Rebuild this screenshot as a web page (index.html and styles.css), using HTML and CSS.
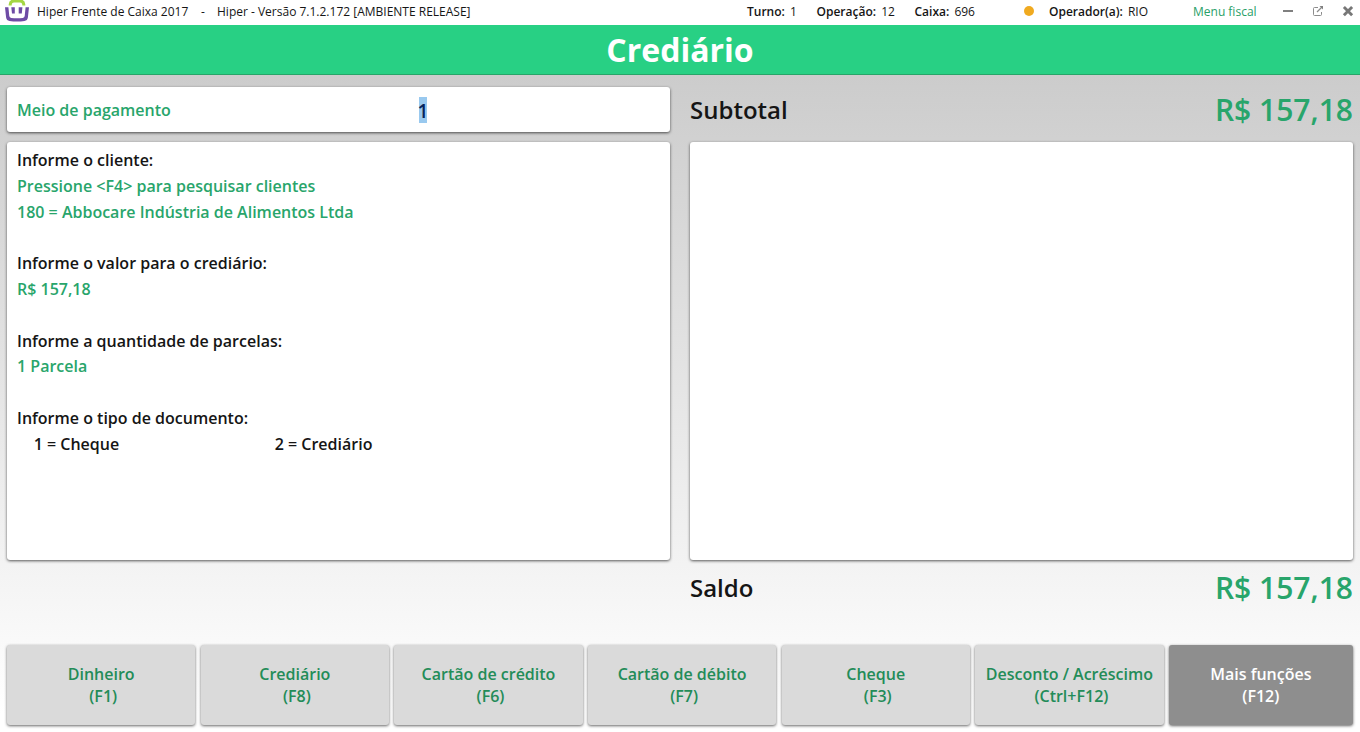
FILE: index.html
```html
<!DOCTYPE html>
<html lang="pt-BR">
<head>
<meta charset="utf-8">
<title>Hiper Frente de Caixa 2017</title>
<link rel="stylesheet" href="styles.css">
</head>
<body>
<header class="titlebar">
  <svg class="logo" width="32" height="24" viewBox="0 0 32 24"><path d="M10.200 5.500V4.500Q10.500 1 14 1H20Q23.500 1 23.800 4.500V5.500" fill="none" stroke="#a4d644" stroke-width="3"/><path d="M5 7.300H8.400L9.300 16Q9.500 17.700 11.200 17.900 17 18.500 22.800 17.900 24.500 17.700 24.700 16L25.600 7.300H29L27.900 17.500Q27.500 20.500 24.500 21 17 22.200 9.500 21 6.500 20.500 6.100 17.500Z" fill="#6e4ba5"/><path d="M11.300 7.300H14.800V13.600H12zM18.700 7.300H22.400L21.800 13.600H18.700z" fill="#6e4ba5"/></svg>
  <span class="app-name">Hiper Frente de Caixa 2017</span>
  <span class="dash">-</span>
  <span class="version">Hiper - Versão 7.1.2.172 [AMBIENTE RELEASE]</span>
  <span class="turno"><b>Turno:</b> 1</span>
  <span class="operacao"><b>Operação:</b> 12</span>
  <span class="caixa"><b>Caixa:</b> 696</span>
  <span class="status"></span>
  <span class="operador"><b>Operador(a):</b> RIO</span>
  <a class="menu">Menu fiscal</a>
  <svg class="controls" width="80" height="24" viewBox="0 0 80 24"><path d="M3 10h10v2H3z" fill="#808080"/><g fill="none" stroke="#8c8c8c"><path d="M38 7.500h-3.500q-1 0-1 1v6q0 1 1 1h6q1 0 1-1V12"/><path d="M37 12l5.500-5.500" stroke-width="1.300"/></g><path d="M39.500 6H43v3.500z" fill="#808080"/><path d="M63.900 7l8.200 8.200m0-8.200-8.200 8.200" stroke="#777" stroke-width="2.900"/></svg>
</header>
<h1 class="heading">Crediário</h1>
<main class="content">
  <div class="column">
    <section class="card payment"><label class="payment-label">Meio de pagamento</label><span class="selected">1</span></section>
    <section class="card details">
      <p>Informe o cliente:</p>
      <p class="value">Pressione &lt;F4&gt; para pesquisar clientes</p>
      <p class="value">180 = Abbocare Indústria de Alimentos Ltda</p>
      <p></p>
      <p>Informe o valor para o crediário:</p>
      <p class="value">R$ 157,18</p>
      <p></p>
      <p>Informe a quantidade de parcelas:</p>
      <p class="value">1 Parcela</p>
      <p></p>
      <p>Informe o tipo de documento:</p>
      <p class="options"><span>1 = Cheque</span><span>2 = Crediário</span></p>
    </section>
  </div>
  <div class="column">
    <div class="total"><span>Subtotal</span><strong>R$ 157,18</strong></div>
    <section class="card receipt"></section>
    <div class="total balance"><span>Saldo</span><strong>R$ 157,18</strong></div>
  </div>
</main>
<footer class="actions">
  <button>Dinheiro<br><span class="key">(F1)</span></button>
  <button>Crediário<br><span class="key">(F8)</span></button>
  <button>Cartão de crédito<br><span class="key">(F6)</span></button>
  <button>Cartão de débito<br><span class="key">(F7)</span></button>
  <button>Cheque<br><span class="key">(F3)</span></button>
  <button>Desconto / Acréscimo<br><span class="key">(Ctrl+F12)</span></button>
  <button class="more">Mais funções<br>(F12)</button>
</footer>
</body>
</html>
```
FILE: styles.css
```css
* { box-sizing: border-box; }
body { margin: 0; height: 732px; overflow: hidden; display: flex; flex-direction: column; font-family: "Open Sans", sans-serif; font-weight: 600; color: #151515; background: linear-gradient(#ccc 75px, #fff 715px); }
.titlebar { height: 25px; padding-bottom: 1px; display: grid; grid-template-columns: 37px 164px 16px 530px 69.500px 98px 109.500px 25px 144px 87px 80px; align-items: center; background: #fff; font-size: 12px; line-height: 22px; font-weight: 400; white-space: nowrap; }
.titlebar b { font-weight: 600; margin-right: 2px; }
.status { width: 10px; height: 10px; border-radius: 50%; background: #f0aa20; margin-bottom: 2px; }
.menu { color: #28a068; }
.heading { margin: 0; height: 50px; background: #28d084; border-bottom: 1px solid #27a568; color: #fff; font-size: 32px; line-height: 49px; font-weight: 700; text-align: center; }
.content { display: grid; grid-template-columns: 663px 663px; gap: 20px; padding: 12px 7px 0; height: 570px; }
.column { display: flex; flex-direction: column; }
.card { background: #fff; border-radius: 3px; box-shadow: 0 1px 3px rgba(0,0,0,.65); }
.payment { height: 45px; display: flex; align-items: center; padding-left: 10px; font-size: 16px; color: #28a56b; }
.payment-label { width: 402px; }
.selected { background: #99c9ef; color: #06245c; font-size: 19px; font-weight: 600; height: 26px; line-height: 28px; width: 8px; display: flex; justify-content: center; }
.details { margin-top: 10px; height: 418px; padding: 5px 10px; font-size: 16px; }
.details p { margin: 0; height: 25.800px; line-height: 26px; }
.value { color: #28a56b; }
.options { display: grid; grid-template-columns: 241px 1fr; padding-left: 16.700px; }
.total { height: 45px; display: flex; align-items: center; justify-content: space-between; font-size: 24px; }
.total strong { font-size: 30px; font-weight: 600; color: #28a56b; }
.receipt { margin-top: 10px; height: 418px; }
.balance { margin-top: 5px; }
.actions { display: grid; grid-template-columns: repeat(6, 188.400px) 184px; gap: 5.250px; padding: 0 7px; height: 80px; }
.actions button { border: 0; padding: 0; border-radius: 3px; background: #dadada; color: #238c58; font: 600 16px/22px "Open Sans", sans-serif; box-shadow: 0 1px 3px rgba(0,0,0,.6); }
.key { margin-left: 4px; }
.actions .more { background: #8e8e8e; color: #fff; }
```
